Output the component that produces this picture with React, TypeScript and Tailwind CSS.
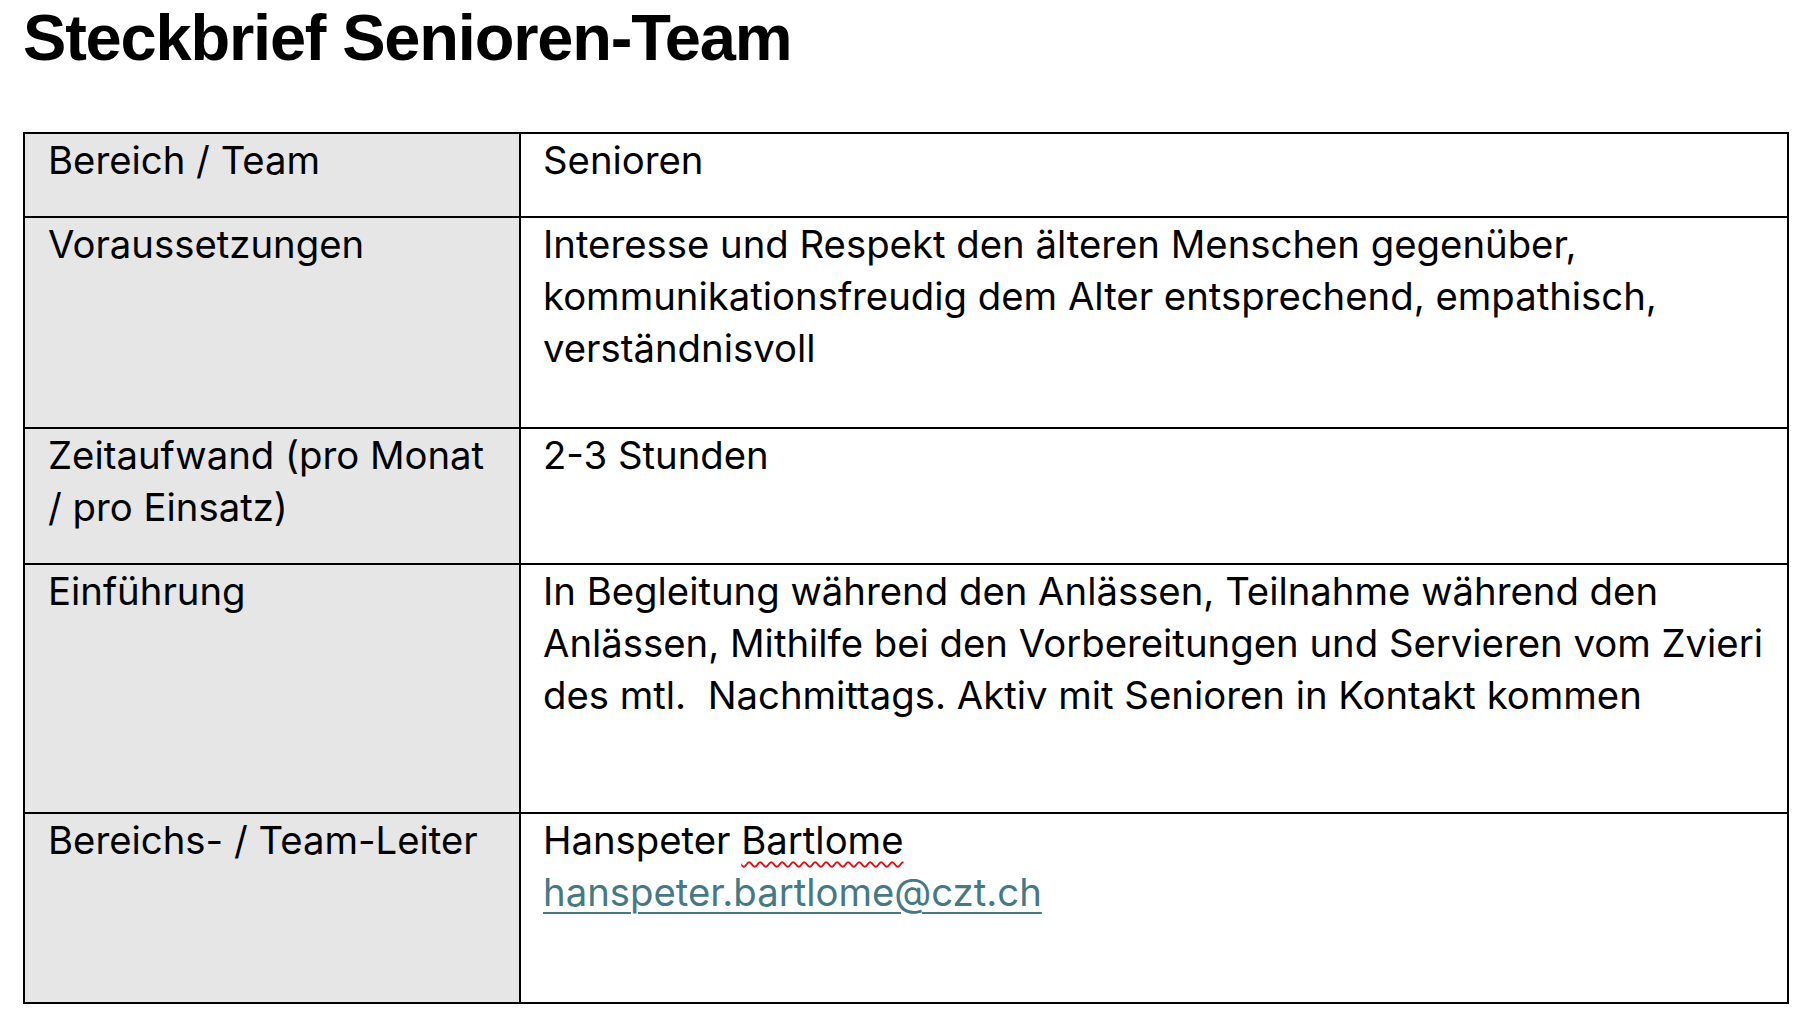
const titleFont = { fontFamily: '"Liberation Sans", Arial, sans-serif' };
const bodyFont = { fontFamily: 'Inter, "Liberation Sans", sans-serif' };

type Row = {
  label: string[];
  value: React.ReactNode[];
  height: string;
};

const rows: Row[] = [
  { label: ['Bereich / Team'], value: ['Senioren'], height: 'h-[82px]' },
  {
    label: ['Voraussetzungen'],
    value: [
      'Interesse und Respekt den älteren Menschen gegenüber,',
      'kommunikationsfreudig dem Alter entsprechend, empathisch,',
      'verständnisvoll',
    ],
    height: 'h-[211px] border-t-2',
  },
  {
    label: ['Zeitaufwand (pro Monat', '/ pro Einsatz)'],
    value: ['2-3 Stunden'],
    height: 'h-[136px] border-t-2',
  },
  {
    label: ['Einführung'],
    value: [
      'In Begleitung während den Anlässen, Teilnahme während den',
      'Anlässen, Mithilfe bei den Vorbereitungen und Servieren vom Zvieri',
      'des mtl.  Nachmittags. Aktiv mit Senioren in Kontakt kommen',
    ],
    height: 'h-[249px] border-t-2',
  },
  {
    label: ['Bereichs- / Team-Leiter'],
    value: [
      <span key="n">
        Hanspeter{' '}
        <span className="underline decoration-wavy decoration-[#e01010] decoration-[1.5px] underline-offset-[7px]">
          Bartlome
        </span>
      </span>,
      <a key="m" href="#" className="text-[#467886] underline decoration-[2px] underline-offset-[6px]">
        hanspeter.bartlome@czt.ch
      </a>,
    ],
    height: 'h-[190px] border-t-2',
  },
];

export default function App() {
  return (
    <div className="min-h-[1020px] w-[1810px] bg-white text-black">
      <h1
        className="pl-[23px] pt-[5px] text-[65px] font-bold leading-[65px] tracking-[-1.2px]"
        style={titleFont}
      >
        Steckbrief Senioren-Team
      </h1>

      <div className="ml-[23px] mt-[62px] w-[1766px] border-2 border-black" style={bodyFont}>
        {rows.map((row, key) => (
          <div key={key} className={`flex border-black ${row.height}`}>
            <div className="w-[494px] shrink-0 bg-[#e6e6e6] pl-[23px] text-[38.3px] leading-[52px]">
              {row.label.map((l, i) => (
                <div key={i} className="whitespace-pre">
                  {l}
                </div>
              ))}
            </div>
            <div className="flex-1 border-l-2 border-black pl-[22px] text-[38.3px] leading-[52px]">
              {row.value.map((v, i) => (
                <div key={i} className="whitespace-pre">
                  {v}
                </div>
              ))}
            </div>
          </div>
        ))}
      </div>
    </div>
  );
}
